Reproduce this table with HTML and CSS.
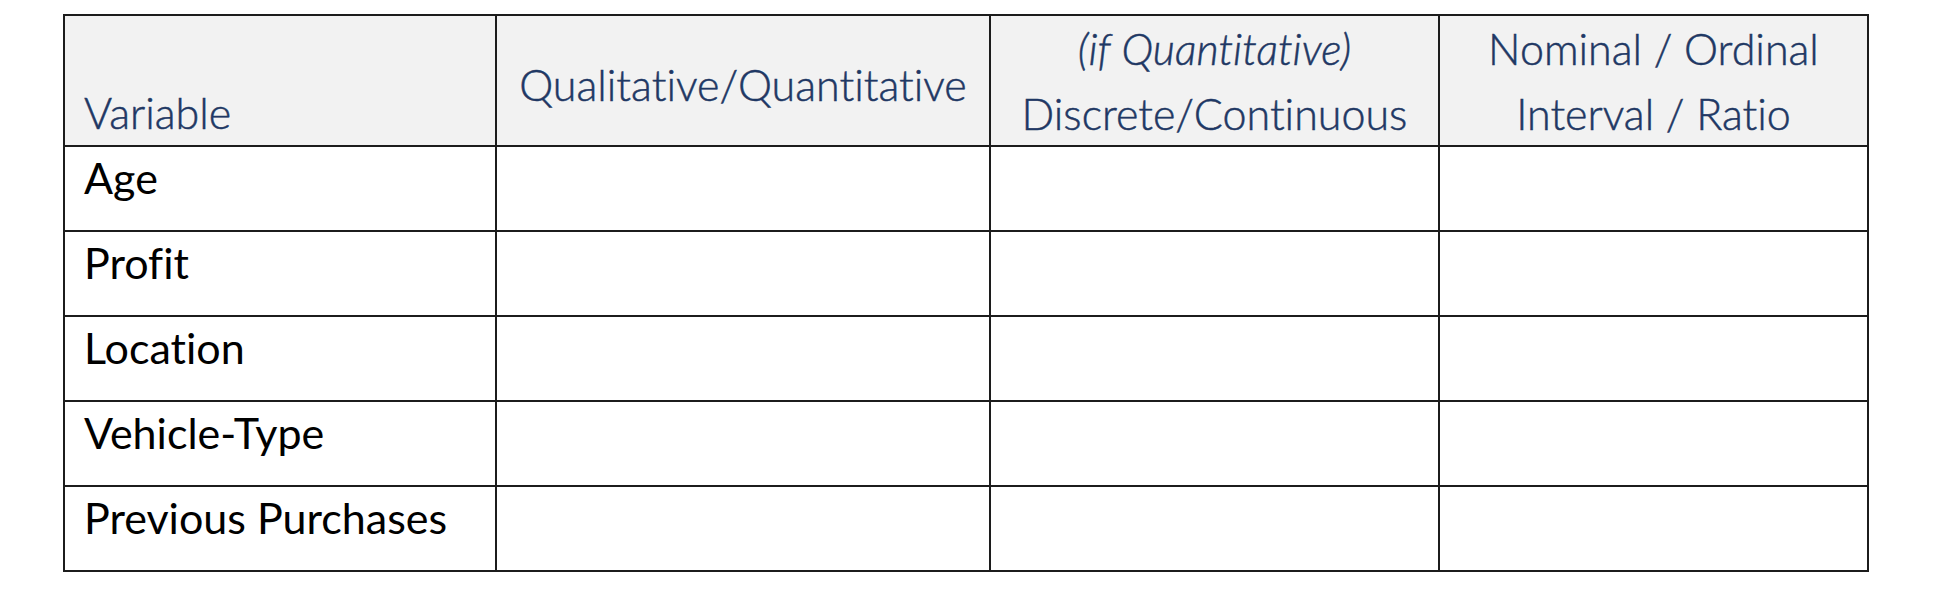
FILE: index.html
```html
<!DOCTYPE html>
<html>
<head>
<meta charset="utf-8">
<link rel="stylesheet" href="styles.css">
</head>
<body>
<div class="page">
<table class="grid">
  <colgroup>
    <col class="c1"><col class="c2"><col class="c3"><col class="c4">
  </colgroup>
  <thead>
    <tr class="head">
      <th class="h-var"><div class="lines">Variable</div></th>
      <th class="h-mid">Qualitative/Quantitative</th>
      <th class="h-two"><div class="lines"><em>(if Quantitative)</em><br>Discrete/Continuous</div></th>
      <th class="h-two"><div class="lines">Nominal / Ordinal<br>Interval / Ratio</div></th>
    </tr>
  </thead>
  <tbody>
    <tr><td class="name">Age</td><td></td><td></td><td></td></tr>
    <tr><td class="name">Profit</td><td></td><td></td><td></td></tr>
    <tr><td class="name">Location</td><td></td><td></td><td></td></tr>
    <tr><td class="name">Vehicle-Type</td><td></td><td></td><td></td></tr>
    <tr><td class="name">Previous Purchases</td><td></td><td></td><td></td></tr>
  </tbody>
</table>
</div>
</body>
</html>
```

FILE: styles.css
```css
html, body {
  margin: 0;
  padding: 0;
  background: #ffffff;
}
.page {
  padding: 14px 0 0 63px;
}
.grid {
  border-collapse: collapse;
  table-layout: fixed;
  width: 1804px;
  font-variant-ligatures: none;
}
.c1 { width: 432px; }
.c2 { width: 494px; }
.c3 { width: 449px; }
.c4 { width: 429px; }
.grid th, .grid td {
  border: 2px solid #1c1c1c;
  padding: 0;
}
.head th {
  height: 121px;
  background: #f2f2f2;
  color: #1f3864;
  font-family: Lato, "Open Sans", sans-serif;
  font-weight: 300;
  font-size: 43px;
  line-height: 63px;
  text-align: center;
  white-space: nowrap;
  vertical-align: top;
  -webkit-text-stroke: 0.5px #1f3864;
}
.head th em { font-style: italic; }
.head .lines {
  line-height: 65px;
}
.head .h-var {
  text-align: left;
  padding-left: 19px;
}
.head .h-var .lines {
  height: 57px;
  padding-top: 64px;
}
.head .h-mid { vertical-align: middle; padding-top: 8px; }
.head .h-two .lines {
  height: 121px;
}
.grid td {
  height: 83px;
  vertical-align: top;
  font-family: Lato, "Open Sans", sans-serif;
  font-weight: 400;
  font-size: 43px;
  line-height: 62px;
  color: #000;
}
.grid td.name { padding-left: 19px; }
```
